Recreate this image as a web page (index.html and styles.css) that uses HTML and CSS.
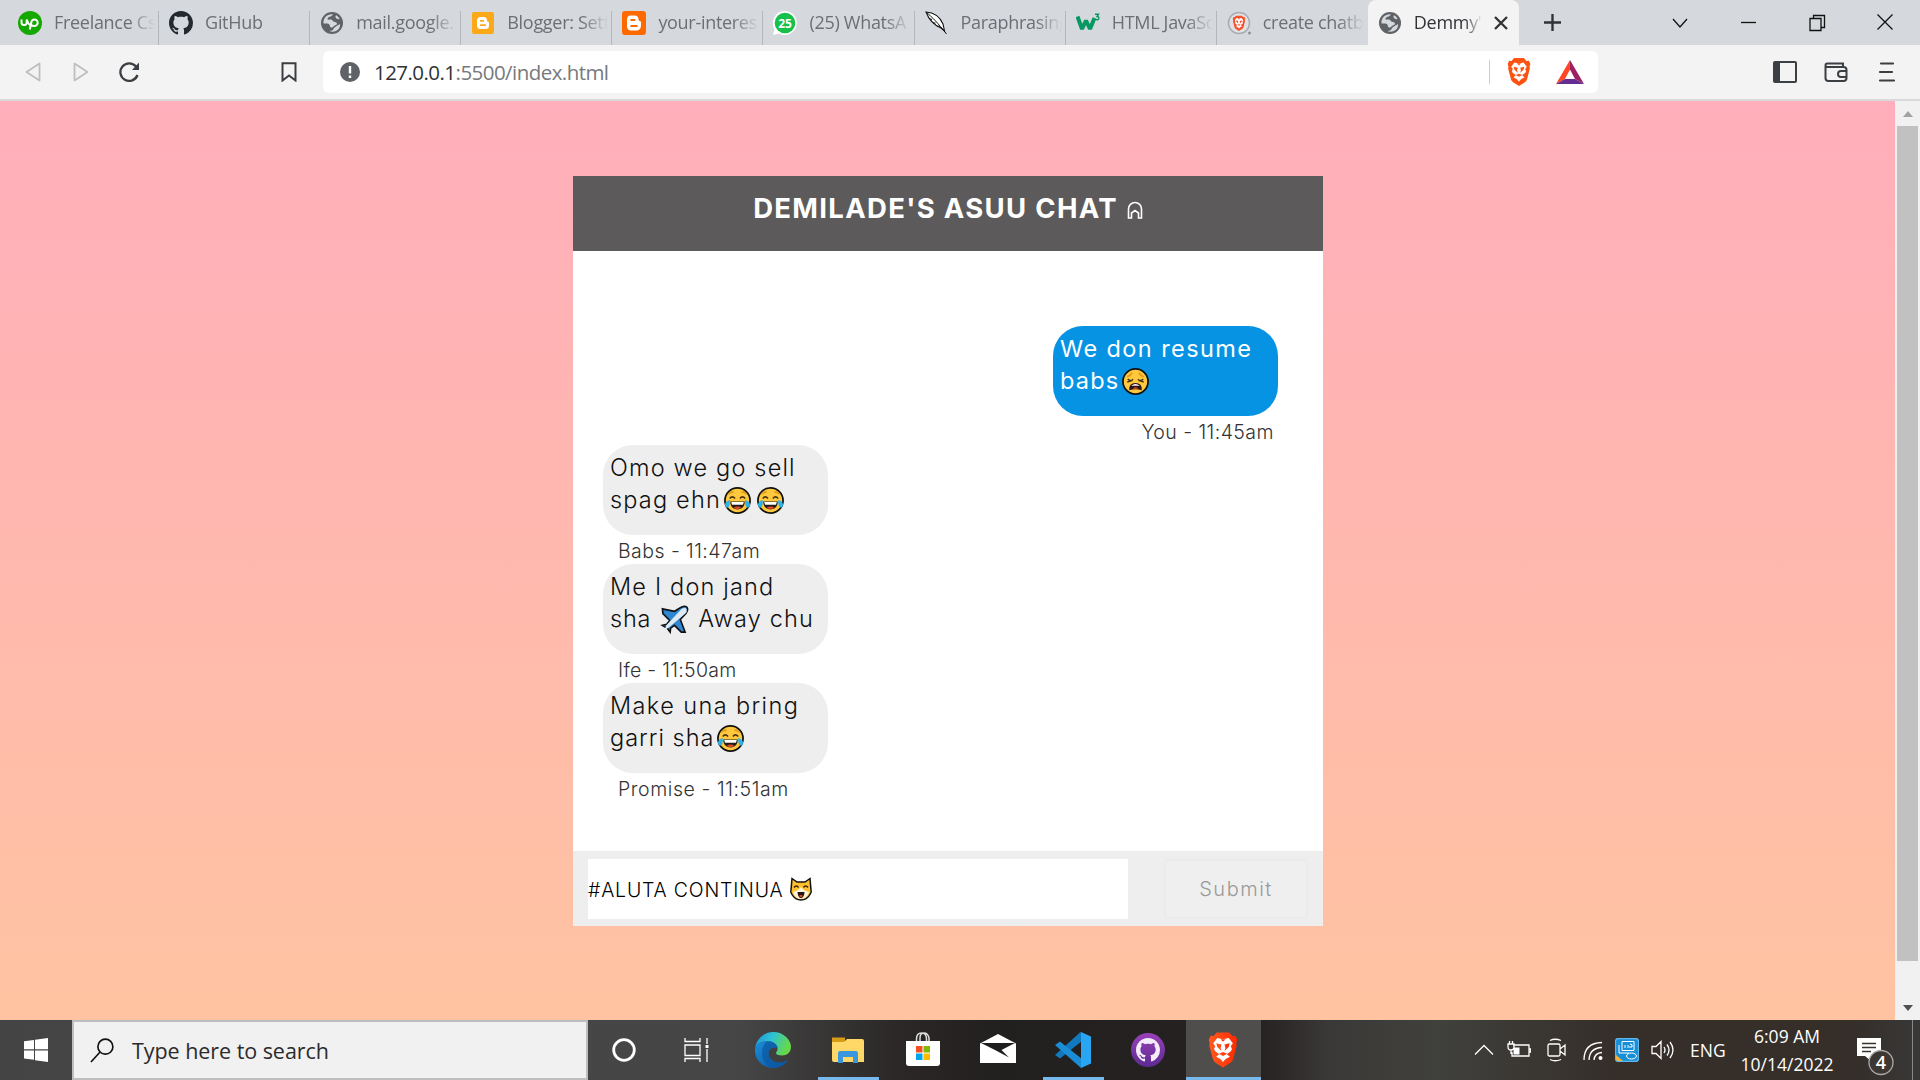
FILE: index.html
```html
<!DOCTYPE html>
<html lang="en">
<head>
<meta charset="utf-8">
<title>Demmy</title>
<link rel="stylesheet" href="styles.css">
</head>
<body>
<svg class="defs" width="0" height="0" aria-hidden="true">
  <defs>
    <linearGradient id="edgeA" x1="0" y1="0" x2="1" y2=".3"><stop offset="0" stop-color="#1c8fd8"/><stop offset=".5" stop-color="#2fc3d4"/><stop offset="1" stop-color="#66d84a"/></linearGradient>
    <linearGradient id="edgeB" x1="0" y1="0" x2="1" y2="1"><stop offset="0" stop-color="#1b8fd9"/><stop offset="1" stop-color="#0b4f9e"/></linearGradient>
    <linearGradient id="braveG" x1="0" x2="1"><stop offset="0" stop-color="#ff5a1f"/><stop offset="1" stop-color="#ff2a00"/></linearGradient>
    <linearGradient id="ghG" x1="0" y1="0" x2="0" y2="1"><stop offset="0" stop-color="#9a40b8"/><stop offset="1" stop-color="#5c2a91"/></linearGradient>
    <symbol id="globe" viewBox="0 0 24 24"><circle cx="12" cy="12" r="11" fill="#5f6368"/><path d="M3.500 12.500c2 .2 4-.3 5.500.8s.2 2.300 1.700 3 2.300-.2 3.300-1.300 2.500-.6 2.900-2c.4-1.500-1.500-1.700-3-2.200s-1.300-2-3-2.200-3.200.9-3.300-.7S9.300 5.800 10.500 5.500s1.500-1 2.500-2.300C7.500 2.600 3 6.500 3.500 12.500zM19.500 8c-1 .5-2 .2-3-.5s-1.600-1.800-.3-3.200c1.400.8 2.500 2 3.300 3.700zM19 17.500c-2.500 3.200-7 4-9.500 2.500 2-.1 3.300-.5 4-2s1.800-2 3-3 2.800-1 3.500-2c.2 1.500-.2 3.200-1 4.500z" fill="#d5d9dd"/></symbol>
    <symbol id="cat" viewBox="0 0 16 16"><path d="M8 0C3.580 0 0 3.580 0 8c0 3.540 2.290 6.530 5.470 7.590.4.070.55-.17.550-.38 0-.19-.01-.82-.01-1.490-2.010.370-2.530-.49-2.690-.94-.09-.23-.48-.94-.82-1.130-.28-.15-.68-.52-.01-.53.630-.01 1.080.580 1.230.820.720 1.210 1.870.870 2.330.660.070-.52.280-.87.510-1.070-1.780-.2-3.640-.89-3.640-3.950 0-.87.310-1.590.820-2.150-.08-.2-.36-1.020.080-2.120 0 0 .67-.21 2.200.820.640-.18 1.320-.27 2-.27s1.360.090 2 .270c1.530-1.040 2.200-.82 2.200-.82.440 1.100.160 1.920.080 2.120.510.560.820 1.270.820 2.150 0 3.070-1.870 3.750-3.650 3.950.290.250.540.730.540 1.480 0 1.070-.01 1.930-.01 2.200 0 .21.150.460.550.380A8.010 8.010 0 0 0 16 8c0-4.420-3.580-8-8-8z"/></symbol>
    <symbol id="lion" viewBox="0 0 28 34"><path d="M8 0h12l3 3.500 3-.2 1.800 4-1 3 .4 2.500-3.400 13c-.5 1.800-1.500 2.800-3 3.800L14 34l-6.800-4.400c-1.500-1-2.500-2-3-3.800L.8 12.800l.4-2.500-1-3 1.800-4 3 .2z"/><path d="M8.500 5.500 14 6.700l5.500-1.200 4 5-2 2.800 1.200 2.700-1 2-4 3 3 2.500-4.200 2.200L14 28.500l-2.500-2.800-4.200-2.200 3-2.500-4-3-1-2 1.200-2.700-2-2.800z" fill="#fff"/><path d="m7.500 10.500 5 1.300-.8 3.200.8 3-4-3.800zM20.500 10.500l-5 1.300.8 3.200-.8 3 4-3.800zM10 20.500l4-1.500 4 1.500-4 2.200zM11.500 6.500 14 9l2.500-2.500z"/></symbol>
    <symbol id="joy" viewBox="0 0 30 30"><circle cx="15" cy="15" r="13" fill="#ffc83d" stroke="#111" stroke-width="1.800"/><path d="M5.500 8.500q2.500-3 5.500-2M24.500 8.500q-2.500-3-5.500-2" fill="none" stroke="#e09a1c" stroke-width="1.800"/><path d="M7 13q2.500-3.500 5.500 0M17.500 13q2.500-3.500 5.500 0" fill="none" stroke="#4a3212" stroke-width="1.600"/><path d="M7.500 16h15c0 5-3 8.200-7.500 8.200S7.500 21 7.500 16z" fill="#231b16"/><path d="M8.500 16.500h13l-.8 2.800H9.300z" fill="#fff"/><path d="M11 22.500q4-2.500 8 0-4 2.500-8 0" fill="#e6492d"/><path d="M7 14.500q-5 1.500-5 5 .5 4 3.500 2.500 2-2 1.500-7.500zM23 14.500q5 1.500 5 5-.5 4-3.500 2.500-2-2-1.500-7.500z" fill="#2fb0e6"/></symbol>
  </defs>
</svg>

<div class="browser">
  <div class="tabs">
    <div class="tab"><svg class="fav" viewBox="0 0 24 24"><circle cx="12" cy="12" r="12" fill="#14a800"/><path d="M3.500 8.500v3a2.600 2.600 0 0 0 5.200 0v-3c1 3.500 2.300 5 3.800 6M11.800 18.500l1.500-7a3.200 3.200 0 1 1 2.800 3.400c-1.800 0-3-.8-4-2" fill="none" stroke="#fff" stroke-width="2"/></svg><span class="name">Freelance Cs</span></div>
    <div class="tab"><svg class="fav" viewBox="0 0 16 16" fill="#24292f"><use href="#cat"/></svg><span class="name">GitHub</span></div>
    <div class="tab"><svg class="fav"><use href="#globe"/></svg><span class="name">mail.google.</span></div>
    <div class="tab"><svg class="fav" viewBox="0 0 24 24"><rect x="1" y="1" width="22" height="22" rx="2" fill="#fba919"/><path d="M9.500 6h3a3.500 3.500 0 0 1 3.500 3.500c0 1.500 2 .5 2 2.500v2.500a3.500 3.500 0 0 1-3.500 3.500h-5A3.500 3.500 0 0 1 6 14.500v-5A3.500 3.500 0 0 1 9.500 6z" fill="#fff"/><path d="M9.700 9.800h2.600M9.700 14.200h4.600" stroke="#fba919" stroke-width="1.800" stroke-linecap="round"/></svg><span class="name">Blogger: Sett</span></div>
    <div class="tab"><svg class="fav" viewBox="0 0 24 24"><rect width="24" height="24" rx="3" fill="#ff6a00"/><path d="M9 4.500h3.500a4 4 0 0 1 4 4c0 2 2.500.8 2.500 3V15a4.500 4.500 0 0 1-4.500 4.500H9A4 4 0 0 1 5 15V8.500a4 4 0 0 1 4-4z" fill="#fff"/><path d="M9.200 9h3.300M9.200 15h5.600" stroke="#ff6a00" stroke-width="2" stroke-linecap="round"/></svg><span class="name">your-interes</span></div>
    <div class="tab"><svg class="fav" viewBox="0 0 24 24"><path d="M12 0a12 12 0 1 1-6 22.500L0 24l1.500-6A12 12 0 0 1 12 0z" fill="#fff"/><circle cx="12" cy="12" r="10.300" fill="#17bf4b"/><text x="12" y="16.500" text-anchor="middle" class="badge-text">25</text></svg><span class="name">(25) WhatsA</span></div>
    <div class="tab"><svg class="fav" viewBox="0 0 24 24"><path d="M1 1c8 .5 14 5 17 12l1.500 7-3.500-3C9 14 4 9 1 1z" fill="#fff" stroke="#111" stroke-width="1.100"/><path d="M1 1c6 5 12 11 20.500 22M5 8l2 .5M8 12l2.500 0M12 15.500l3-.5" fill="none" stroke="#111" stroke-width="1"/></svg><span class="name">Paraphrasing</span></div>
    <div class="tab"><svg class="fav" viewBox="0 0 24 24"><path d="M1.500 5.500 6 18l4-8.500L14 18l4.500-11" fill="none" stroke="#059862" stroke-width="4" stroke-linejoin="bevel"/><path d="M19 3.200h3.500L21 5.500q2.500 0 1.700 2.300-1 1.500-3.200.6" fill="none" stroke="#059862" stroke-width="1.400"/></svg><span class="name">HTML JavaSc</span></div>
    <div class="tab"><svg class="fav" viewBox="0 0 24 24"><circle cx="12" cy="12" r="10.500" fill="#dfe1e5" stroke="#a9acb1" stroke-width="1.500"/><use href="#lion" x="5.500" y="4.500" width="13" height="15.500" fill="#f4512c"/><circle cx="22.500" cy="22" r="1.500" fill="#8e9297"/></svg><span class="name">create chatb</span></div>
    <div class="tab active"><svg class="fav"><use href="#globe"/></svg><span class="name">Demmy'</span><svg class="close" viewBox="0 0 14 14"><path d="m1 1 12 12M13 1 1 13" stroke="#303236" stroke-width="2.300"/></svg></div>
    <svg class="plus" viewBox="0 0 18 18"><path d="M9 0v18M0 9h18" stroke="#303236" stroke-width="2.500"/></svg>
    <div class="window-buttons">
      <svg viewBox="0 0 22 22"><path d="m4 7 7 8 7-8" /></svg>
      <svg viewBox="0 0 22 22"><path d="M4 10.500h15"/></svg>
      <svg viewBox="0 0 22 22"><path d="M4 6.500h11v12H4zM7.500 6V3.500h11v12H15.500"/></svg>
      <svg viewBox="0 0 22 22"><path d="m3.500 2.500 15 15M18.500 2.500l-15 15"/></svg>
    </div>
  </div>

  <div class="toolbar">
    <svg class="nav-back" viewBox="0 0 16 20"><path d="M14.500 1.500v17L1.500 10z"/></svg>
    <svg class="nav-forward" viewBox="0 0 16 20"><path d="M1.500 1.500v17L14.500 10z"/></svg>
    <svg class="reload" viewBox="0 0 22 22"><path d="M18 5.500A8.800 8.800 0 1 0 19.500 14" fill="none" stroke="#3b3e42" stroke-width="2.300"/><path d="M21 1.500v7.500h-7z" fill="#3b3e42"/></svg>
    <svg class="bookmark" viewBox="0 0 16 20"><path d="M1.500 1.200h13v17.300L8 13.500l-6.500 5z" fill="none" stroke="#3b3e42" stroke-width="2"/></svg>
    <div class="address">
      <svg class="info" viewBox="0 0 20 20"><circle cx="10" cy="10" r="10" fill="#5f6368"/><path d="M10 4v7.500M10 13.500v2.500" stroke="#fff" stroke-width="2.400"/></svg>
      <span class="url"><b>127.0.0.1</b>:5500/index.html</span>
      <i class="rule"></i>
      <svg class="shield" fill="#fb5412"><use href="#lion"/></svg>
      <svg class="bat" viewBox="0 0 28 24"><path d="M14 0 0 24l9-5 5-9.500z" fill="#ff4724"/><path d="M14 0v9.500l5 9.500 9 5z" fill="#9e1f63"/><path d="M0 24h28l-9-5H9z" fill="#662d91"/></svg>
    </div>
    <div class="tools">
      <svg viewBox="0 0 24 24"><rect x="1" y="2" width="22" height="20" rx="1" fill="none" stroke="#3b3e42" stroke-width="2"/><path d="M1 2h6v20H1z" fill="#3b3e42"/></svg>
      <svg viewBox="0 0 24 24"><path d="M1.500 6V18a3 3 0 0 0 3 3h15a3 3 0 0 0 3-3V10a3 3 0 0 0-3-3H4a2 2 0 0 1-2.500-2A2 2 0 0 1 4 3.500h15V7M23 11h-6a3 3 0 0 0 0 6h6" fill="none" stroke="#3b3e42" stroke-width="2"/></svg>
      <svg viewBox="0 0 24 24"><path d="M6 3.500h12M5 12h12M5 20.500h14" stroke="#3b3e42" stroke-width="2.200" stroke-linecap="round"/></svg>
    </div>
  </div>
</div>

<div class="viewport">
  <main class="page">
    <section class="chat">
      <h1 class="chat-title"><span>DEMILADE'S ASUU CHAT</span><svg viewBox="0 0 16 18"><path d="M4.500 17H1.500V8a6.500 6.500 0 0 1 13 0v9h-3v-5L8 9.500 4.500 12z" fill="none" stroke="#fff" stroke-width="1.600"/></svg></h1>
      <div class="messages">
        <div class="message mine">
          <p class="bubble"><span class="m1">We don resume</span><br><span class="m2">babs</span><svg class="emoji" viewBox="0 0 30 30"><circle cx="15" cy="15" r="13" fill="#ffc83d" stroke="#111" stroke-width="1.800"/><path d="M6.500 10q3.500-1 5-4M23.500 10q-3.500-1-5-4" fill="none" stroke="#dd971d" stroke-width="1.700"/><path d="M7 12.500q3 3 5.500 0M23 12.500q-3 3-5.500 0M6.500 15.500l5.500-1.800M23.500 15.500 18 13.700" fill="none" stroke="#4a3212" stroke-width="1.400"/><path d="M8.500 24q-.5-7.500 6.500-7.500T21.500 24q-6.500-2-13 0z" fill="#2a1512"/><path d="M10.500 19.500q4.500-4 9 0z" fill="#fff"/><path d="M12 22.500q3-3 6 0z" fill="#e8462c"/></svg></p>
          <p class="meta">You - 11:45am</p>
        </div>
        <div class="message">
          <p class="bubble"><span>Omo we go sell</span><br><span>spag ehn</span><svg class="emoji"><use href="#joy"/></svg><svg class="emoji second"><use href="#joy"/></svg></p>
          <p class="meta">Babs - 11:47am</p>
        </div>
        <div class="message">
          <p class="bubble"><span>Me I don jand</span><br><span class="m6">sha</span><svg class="emoji plane" viewBox="0 0 30 30"><path d="M2.500 4 15 6.500l6.500-4q5-2.500 6.500 0t-1 6L21 15l5 13h-4L15 21l-4 3-.5 4-3-4-5-3 4.500-1 3-4L3 9z" fill="#2f86d2" stroke="#111" stroke-width="1.700"/><path d="m4.500 26 2-5L22.500 4q4-2 5 .5T26 9L9.500 23z" fill="#dcebf3"/></svg><span>Away chu</span></p>
          <p class="meta m-ife">Ife - 11:50am</p>
        </div>
        <div class="message">
          <p class="bubble"><span class="m8">Make una bring</span><br><span class="m9">garri sha</span><svg class="emoji"><use href="#joy"/></svg></p>
          <p class="meta m-promise">Promise - 11:51am</p>
        </div>
      </div>
      <div class="compose">
        <div class="field"><span class="draft">#ALUTA CONTINUA</span><svg viewBox="0 0 24 24"><path d="M3 1.500 8 5h8l5-3.500 1 11.500q1 2-1 4.500c-2 3.500-5.500 5.500-9 5.500s-7-2-9-5.500Q1 15 2 13z" fill="#ffc02e" stroke="#111" stroke-width="1.500"/><path d="M4 15q5-1 8-5 3 4 8 5-2 7-8 7t-8-7z" fill="#fff3dc"/><path d="M5 10.500q2.500-3 4.500 0M14.500 10.500q2-3 4.500 0" fill="none" stroke="#33230e" stroke-width="1.500"/><path d="M8.500 15h7q-.5 6-3.500 6t-3.500-6z" fill="#241512"/><path d="M10 19q2-2 4 0-2 2-4 0" fill="#ec4e31"/></svg></div>
        <button class="submit" disabled><span>Submit</span></button>
      </div>
    </section>
  </main>
  <div class="scrollbar"><i class="up"></i><i class="thumb"></i><i class="down"></i></div>
</div>

<footer class="taskbar">
  <div class="start"><svg viewBox="0 0 24 24" fill="#fff"><path d="M0 3.300 10 1.900V11.300H0zM11 1.700 24 0v11.300H11zM0 12.400h10v9.300L0 20.500zM11 12.400h13V24l-13-1.700z"/></svg></div>
  <div class="search"><svg viewBox="0 0 26 26"><circle cx="16" cy="9" r="7.800" fill="none" stroke="#111" stroke-width="1.700"/><path d="M10.500 14.500 1 25" stroke="#111" stroke-width="1.700"/></svg><span>Type here to search</span></div>
  <div class="apps">
    <div class="app cortana"><svg viewBox="0 0 36 36"><circle cx="18" cy="18" r="10.300" fill="none" stroke="#fff" stroke-width="2.800"/></svg></div>
    <div class="app"><svg viewBox="0 0 36 36"><path d="M5 6v3.500h15V6M5 30v-3.500h15V30M5 13h15v10.500H5zM27 6v6M27 17v13" fill="none" stroke="#fff" stroke-width="1.300"/><path d="M25.500 13h3v3h-3z" fill="#fff"/></svg></div>
    <div class="app"><svg viewBox="0 0 36 36"><path d="M0 17C1 7 9 0 18 0c11 0 18 8 18 15 0 5-4 8.500-9 8.500-4 0-6-1.300-6-2.300 0-1.200 1.500-1.500 1.500-4.700C22.500 12 17 9 12 9 6 9 1.500 12.500 0 17z" fill="url(#edgeA)"/><path d="M0 17.500C1 12 6 9 12 9c6 0 10.500 3.500 10.500 7-6-2-11.500 3-8 9.500 3.500 6 11.500 6.500 18.500 2.500C29 34 23 36 18 36 8 36-.5 28 0 17.500z" fill="url(#edgeB)"/><path d="M12 9.500c-7 5-7 20 3 26 8 1.500 15-2.500 18-7.500-7 4-15 3.500-18.500-2.500-3.500-6.500 2-11.500 8-9.500 0-3.500-4-6.500-10.500-6.500z" fill="#0c59a4" opacity=".75"/></svg></div>
    <div class="app open"><svg viewBox="0 0 36 36"><path d="M2 5.500h13v6H2z" fill="#d89b17"/><path d="M2 10h12l3-3h15q2 0 2 2v21H4q-2 0-2-2z" fill="#ffd867"/><path d="M8 31V21q0-2 2-2h16q2 0 2 2v10h-5v-6H13v6z" fill="#3b97dd"/></svg></div>
    <div class="app"><svg viewBox="0 0 36 36"><path d="M11.500 12V7q0-6 5-6t5 6v5M15 9V6q0-5 4-5t5 5v5" fill="none" stroke="#ddd" stroke-width="1.500"/><path d="M1 9h34v22q0 3-3 3H4q-3 0-3-3z" fill="#fff"/><path d="M11 14h6.500v6.500H11z" fill="#f25022"/><path d="M18.500 14H25v6.500h-6.500z" fill="#7fba00"/><path d="M11 21.500h6.500V28H11z" fill="#00a4ef"/><path d="M18.500 21.500H25V28h-6.500z" fill="#ffb900"/></svg></div>
    <div class="app"><svg viewBox="0 0 36 36"><path d="M0 11.500 18 2l18 9.500V31H0z" fill="#fff"/><path d="M1 11h34l-13.500 7L29 25.500 15 18z" fill="#1f1e1e"/></svg></div>
    <div class="app open"><svg viewBox="0 0 36 36"><path d="m26 0 1 9L5 26.500 0 23 25 .5z" fill="#1279bf"/><path d="M0 13l5-3.500L27 27l-1 9z" fill="#1b8cd6"/><path d="M26 0 36 4.500v27L26 36z" fill="#2aa5f2"/></svg></div>
    <div class="app"><svg viewBox="0 0 36 36"><circle cx="18" cy="18" r="17" fill="url(#ghG)"/><use href="#cat" x="6" y="6" width="24" height="24" fill="#f5ecfa"/></svg></div>
    <div class="app open current"><svg viewBox="0 0 36 36"><use href="#lion" x="3.500" y="0" width="29" height="36" fill="url(#braveG)"/></svg></div>
  </div>
  <div class="tray">
    <svg class="chev" viewBox="0 0 20 24"><path d="m1 16.500 9-9 9 9"/></svg>
    <svg class="battery" viewBox="0 0 24 24"><path d="M6 7h16v11H5v-4M22.500 11h1v3h-1M1 6h6v3q0 3-3 3t-3-3zM2.500 3v3M5.500 3v3M4 12v4"/><path d="M7 9.500h5.500v7H6.500v-4z" class="solid"/></svg>
    <svg class="camera" viewBox="0 0 20 24"><path d="M2.500 6h9q1.500 0 1.500 1.500v9q0 1.500-1.500 1.500h-9Q1 18 1 16.500v-9Q1 6 2.500 6zM13 11l5-4v10l-5-4M3 2.500q5-2.500 11 0M3 21.500q5 2.500 11 0"/></svg>
    <svg class="wifi" viewBox="0 0 20 24"><path d="M1 22Q1 5 19 4.500M6 22Q6.500 10 19 9.500M11 22q.5-7 8-7.500"/><circle cx="17.500" cy="20" r="2" class="solid"/></svg>
    <svg class="intel" viewBox="0 0 24 24"><rect x=".5" y=".5" width="23" height="23" rx="3" fill="#168ed8" stroke="#60b7ec"/><path d="M1 17v4q0 2 2 2h5z" fill="#f3b233" stroke="none"/><path d="M7 3.500h12v9H7zM4 7v8h10M10 7v3M13 7v3M15 6q3 0 2 3h-3" stroke-width="1"/><ellipse cx="16.500" cy="18" rx="5" ry="3" stroke-width="1"/></svg>
    <svg class="speaker" viewBox="0 0 24 24"><path d="M1 8.500h4l5-5v17l-5-5H1zM13 9q2 3 0 6M16 6.500q4 5.500 0 11M19 4q6 8 0 16"/></svg>
    <span class="lang">ENG</span>
    <span class="clock"><span class="time">6:09 AM</span><span class="date">10/14/2022</span></span>
    <svg class="notice" viewBox="0 0 38 40"><path d="M0 0h24v18H14v5l-6-5H0z" class="solid"/><path d="M5 5.500h14M5 9.500h14M5 13.500h9" class="lines"/><circle cx="24" cy="24.500" r="12" class="ring"/><text x="24" y="31" text-anchor="middle">4</text></svg>
    <i class="peek"></i>
  </div>
</footer>
</body>
</html>
```
FILE: styles.css
```css
* { box-sizing: border-box; }
body { margin: 0; width: 1920px; height: 1080px; overflow: hidden; display: flex; flex-direction: column; font-family: "Open Sans", "Noto Sans", sans-serif; }
.defs { position: absolute; }
svg { display: block; flex: none; }
p, h1 { margin: 0; }

/* browser frame */
.browser { height: 101px; flex: none; border-bottom: 2px solid #d9d9dc; background: #f3f3f3; }
.tabs { height: 45px; display: flex; align-items: center; background: #d5d8dc; padding-left: 8px; }
.tab { width: 151.100px; height: 45px; padding: 0 4px 0 10px; display: flex; align-items: center; gap: 12px; position: relative; flex: none; }
.tab::after { content: ""; position: absolute; right: 0; top: 11px; width: 1px; height: 34px; background: #b3b6ba; }
.tab:nth-child(9)::after, .tab.active::after { display: none; }
.fav { width: 24px; height: 24px; }
.name { flex: 1; overflow: hidden; white-space: nowrap; font-size: 18px; letter-spacing: -.3px; color: #6c7075; margin-top: -1px; -webkit-mask-image: linear-gradient(90deg, #000 74%, transparent 100%); mask-image: linear-gradient(90deg, #000 74%, transparent 100%); }
.tab.active { background: #f3f3f3; border-radius: 8px 8px 0 0; padding-right: 11px; }
.active .name { color: #303236; }
.close { width: 14px; height: 14px; }
.badge-text { font: bold 12px "Open Sans", sans-serif; fill: #fff; }
.plus { width: 17px; height: 17px; margin-left: 25px; }
.window-buttons { margin-left: auto; display: flex; gap: 46.500px; padding-right: 24px; }
.window-buttons svg { width: 22px; height: 22px; fill: none; stroke: #111; stroke-width: 1.300; }

.toolbar { height: 54px; display: flex; align-items: center; }
.nav-back, .nav-forward { width: 16px; height: 20px; fill: none; stroke: #bdbec0; stroke-width: 1.800; stroke-linejoin: round; }
.nav-back { margin-left: 25px; }
.nav-forward { margin-left: 32px; }
.reload { width: 22px; height: 22px; margin-left: 29px; }
.bookmark { width: 16px; height: 20px; margin-left: 141px; }
.address { width: 1275px; height: 42px; margin-left: 26px; background: #fff; border-radius: 6px; display: flex; align-items: center; padding: 0 14px 0 17px; }
.info { width: 20px; height: 20px; }
.url { margin-left: 14px; font-size: 20.500px; color: #77797d; letter-spacing: -.55px; }
.url b { font-weight: 400; color: #303236; }
.rule { margin-left: auto; width: 1px; height: 24px; background: #ccc; }
.shield { width: 24px; height: 28px; margin-left: 17px; }
.bat { width: 28px; height: 24px; margin-left: 25px; }
.tools { margin-left: auto; padding-right: 21px; display: flex; gap: 27px; }
.tools svg { width: 24px; height: 24px; }

/* page area */
.viewport { height: 919px; flex: none; display: flex; }
.page { flex: 1; background: linear-gradient(#ffaebb, #ffc3a1); padding: 75px 0 0 573px; }
.scrollbar { width: 25px; background: #f1f1f1; display: flex; flex-direction: column; align-items: center; padding: 10px 0 9px; }
.up, .down { border: 5.500px solid transparent; width: 0; height: 0; }
.up { border-top: 0; border-bottom: 6px solid #a3a3a3; margin-bottom: 9px; }
.down { border-bottom: 0; border-top: 6px solid #505050; margin-top: auto; }
.thumb { width: 21px; height: 835px; background: #c1c1c1; }

.chat { width: 750px; height: 750px; background: #fff; display: flex; flex-direction: column; font-family: Inter, "Open Sans", sans-serif; }
.chat-title { height: 75px; background: #5c5a5a; color: #fff; font-size: 27.500px; line-height: 64px; font-weight: 700; letter-spacing: 1.300px; display: flex; justify-content: center; gap: 9px; white-space: nowrap; }
.chat-title svg { width: 16px; height: 18px; margin-top: 25px; }
.messages { height: 600px; padding: 75px 45px 0 30px; }
.message { height: 119px; }
.mine { display: flex; flex-direction: column; align-items: flex-end; }
.bubble { width: 225px; height: 90px; padding: 7px 0 0 7px; border-radius: 30px; background: #eee; color: #111; font-size: 23.500px; line-height: 32px; font-weight: 300; letter-spacing: 1.180px; white-space: nowrap; }
.bubble span { display: inline-block; height: 32px; vertical-align: top; }
.bubble .m1 { letter-spacing: 1.420px; }
.bubble .m6 { letter-spacing: .8px; }
.bubble .m8 { letter-spacing: 1.400px; }
.bubble .m9 { letter-spacing: 1px; }
.mine .bubble { background: #0693e3; color: #fff; font-weight: 400; }
.emoji { display: inline-block; width: 29px; height: 29px; margin: 2px 0 0 2px; vertical-align: top; }
.emoji.second { margin-left: 4px; }
.plane { margin: 2px 9px 0 9px; }
.meta { height: 29px; line-height: 33px; padding-left: 15px; font-size: 19.500px; font-weight: 300; letter-spacing: .45px; color: #333; white-space: nowrap; }
.m-ife { letter-spacing: .3px; }
.m-promise { letter-spacing: .58px; }
.mine .meta { padding: 0 4px 0 0; }
.compose { height: 75px; background: #eee; padding: 8px 15px 7px; display: flex; justify-content: space-between; }
.field { width: 540px; background: #fff; display: flex; align-items: center; gap: 6px; font-size: 19.500px; font-weight: 300; letter-spacing: .8px; color: #000; white-space: nowrap; }
.field span { padding-top: 1px; }
.field svg { width: 24px; height: 24px; }
.submit { width: 144px; padding: 0; border: 2px solid #ebebeb; border-radius: 4px; background: #efefef; color: #999; font: 300 20px Inter, "Open Sans", sans-serif; letter-spacing: 1.500px; }

/* taskbar */
.taskbar { height: 60px; flex: none; display: flex; background: linear-gradient(90deg, #444 0, #464646 740px, #2a2726 900px, #22201f 1000px, #252221 1260px, #3b3937 1330px, #40403d 1440px, #352e29 1620px, #352e29 1850px, #383838 1920px); color: #fff; }
.start { width: 72px; display: flex; align-items: center; padding-left: 24px; }
.start svg { width: 24px; height: 24px; }
.search { width: 516px; background: #f1f1f1; border: 2px solid #bebebe; color: #2b2b2b; display: flex; align-items: center; padding-left: 16px; gap: 17px; font-size: 21.500px; letter-spacing: -.05px; }
.search span { padding-top: 1px; }
.search svg { width: 25px; height: 25px; }
.apps { display: flex; }
.app { width: 75px; height: 60px; display: flex; align-items: center; justify-content: center; position: relative; }
.app.cortana { width: 72.500px; }
.app svg { width: 36px; height: 36px; }
.app.open::after { content: ""; position: absolute; left: 7px; bottom: 0; width: 61px; height: 3px; background: #76b9ed; }
.app.current { background: #504e4d; }
.app.open.current::after { left: 0; width: 75px; }
.tray { flex: 1; display: flex; align-items: center; padding-left: 213.500px; }
.tray svg { fill: none; stroke: #fff; stroke-width: 1.300; height: 24px; }
.tray .solid { fill: #fff; stroke: none; }
.chev { width: 20px; }
.battery { width: 24px; margin-left: 13px; }
.camera { width: 20px; margin-left: 16px; }
.wifi { width: 20px; margin-left: 16px; }
.intel { width: 24px; margin-left: 12px; }
.speaker { width: 24px; margin-left: 12px; }
.lang { margin-left: 15px; width: 35px; font-size: 17.500px; }
.clock { margin-left: 12px; width: 100px; display: flex; flex-direction: column; align-items: center; font-size: 17.500px; line-height: 28.500px; white-space: nowrap; }
.tray .notice { width: 38px; height: 40px; margin: 16px 0 0 20px; }
.notice .lines { stroke: #39322d; stroke-width: 1.500; }
.notice .ring { fill: #3c3733; stroke: #aaa; }
.notice text { font: 600 18px "Open Sans", sans-serif; fill: #fff; stroke: none; }
.peek { margin-left: auto; margin-right: 7px; width: 1px; height: 60px; background: #888; }
```
